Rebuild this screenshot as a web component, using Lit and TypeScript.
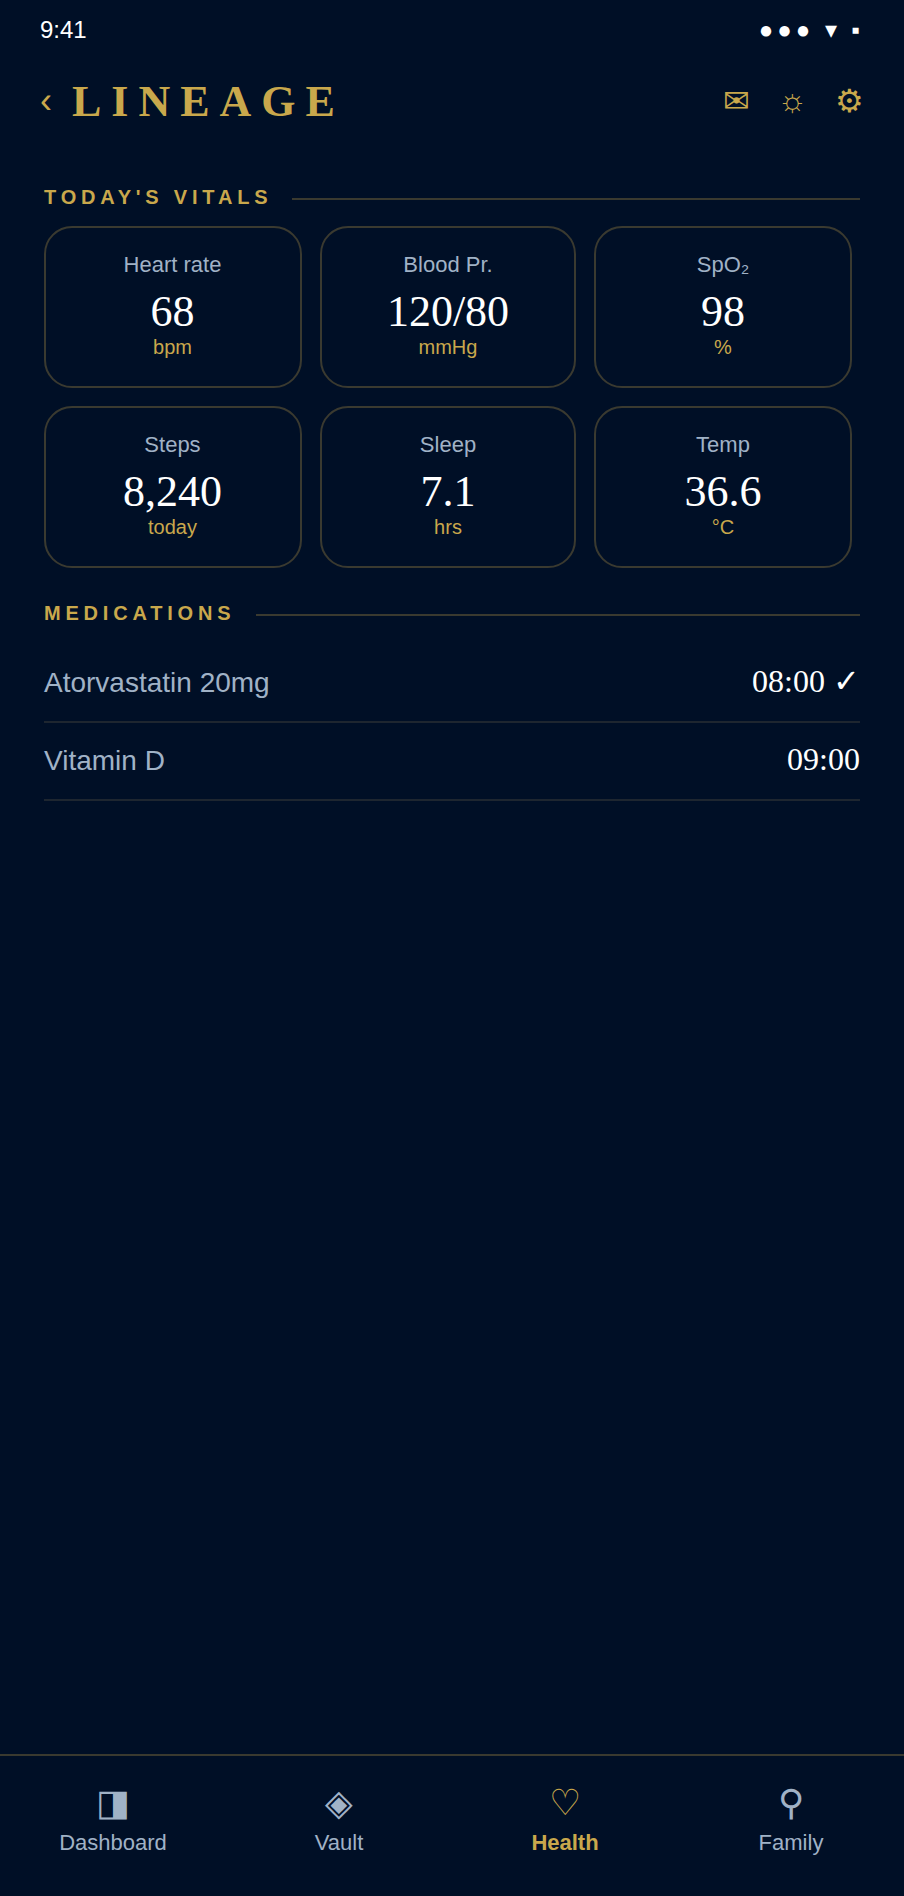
import { LitElement, html, css } from "lit";
import { customElement } from "lit/decorators.js";

const vitals = [
  ["Heart rate", "68", "bpm"],
  ["Blood Pr.", "120/80", "mmHg"],
  ["SpO₂", "98", "%"],
  ["Steps", "8,240", "today"],
  ["Sleep", "7.1", "hrs"],
  ["Temp", "36.6", "°C"],
];
const meds = [
  ["Atorvastatin 20mg", "08:00 ✓"],
  ["Vitamin D", "09:00"],
];
const nav = [
  ["◨", "Dashboard", false],
  ["◈", "Vault", false],
  ["♡", "Health", true],
  ["⚲", "Family", false],
];

@customElement("app-root")
export class AppRoot extends LitElement {
  static styles = css`
    :host {
      display: flex;
      flex-direction: column;
      min-height: 1896px;
      background: #000f26;
      color: #fff;
      font-family: "Liberation Sans", sans-serif;
    }
    .status {
      display: flex;
      justify-content: space-between;
      align-items: center;
      padding: 16px 40px 0;
      height: 28px;
      font-size: 24px;
    }
    .status-icons { font-size: 24px; letter-spacing: 4px; }
    .header {
      display: flex;
      align-items: center;
      justify-content: space-between;
      padding: 18px 40px 0;
      height: 78px;
    }
    .brand { display: flex; align-items: center; gap: 20px; color: #c9a84c; }
    .back { font-size: 36px; }
    .title {
      font-family: "Liberation Serif", serif;
      font-weight: 700;
      font-size: 44px;
      letter-spacing: 10px;
    }
    .actions { display: flex; gap: 28px; color: #c9a84c; font-size: 32px; }
    .main { padding: 0 44px; }
    .section {
      display: flex;
      align-items: center;
      gap: 20px;
      margin-top: 45px;
      height: 24px;
      color: #c9a84c;
      font-size: 20px;
      font-weight: 700;
      letter-spacing: 4.8px;
    }
    .section::after {
      content: "";
      flex: 1;
      height: 2px;
      margin-top: 4px;
      background: #3a3a30;
    }
    .section.second { margin-top: 33px; gap: 21px; }
    .grid {
      display: grid;
      grid-template-columns: 258px 256px 258px;
      gap: 18px;
      margin-top: 17px;
    }
    .card {
      box-sizing: border-box;
      height: 162px;
      border: 2px solid #3a3a30;
      border-radius: 28px;
      padding: 24px 12px 0;
      text-align: center;
    }
    .card:nth-child(3n + 1) { padding-right: 13px; }
    .label { font-size: 22px; line-height: 26px; color: #a0b2c6; }
    .value {
      font-family: "Liberation Serif", serif;
      font-size: 44px;
      line-height: 47px;
      margin-top: 10px;
    }
    .unit { font-size: 20px; line-height: 24px; color: #c9a84c; }
    .meds { margin-top: 20px; }
    .med {
      box-sizing: border-box;
      display: flex;
      justify-content: space-between;
      align-items: baseline;
      height: 78px;
      padding-top: 20px;
      border-bottom: 2px solid #1e2630;
      line-height: 32px;
    }
    .med-name { font-size: 28px; color: #a0b2c6; }
    .med-time { font-family: "Liberation Serif", serif; font-size: 32px; }
    .nav {
      display: grid;
      grid-template-columns: repeat(4, 1fr);
      margin-top: auto;
      height: 142px;
      border-top: 2px solid #3a3a30;
      box-sizing: border-box;
    }
    .tab {
      display: flex;
      flex-direction: column;
      align-items: center;
      padding-top: 25px;
      color: #a0b2c6;
      font-size: 22px;
    }
    .tab.active { color: #c9a84c; font-weight: 700; }
    .tab-icon { font-size: 36px; line-height: 44px; font-weight: 400; }
    .tab-label { line-height: 26px; margin-top: 5px; }
  `;

  render() {
    return html`
      <div class="status">
        <span>9:41</span>
        <span class="status-icons">●●● ▾ ▪</span>
      </div>
      <div class="header">
        <div class="brand">
          <span class="back">‹</span>
          <span class="title">LINEAGE</span>
        </div>
        <div class="actions"><span>✉</span><span>☼</span><span>⚙</span></div>
      </div>
      <div class="main">
        <div class="section">TODAY'S VITALS</div>
        <div class="grid">
          ${vitals.map(
            ([l, v, u]) => html`<div class="card">
              <div class="label">${l}</div>
              <div class="value">${v}</div>
              <div class="unit">${u}</div>
            </div>`
          )}
        </div>
        <div class="section second">MEDICATIONS</div>
        <div class="meds">
          ${meds.map(
            ([n, t]) => html`<div class="med">
              <span class="med-name">${n}</span>
              <span class="med-time">${t}</span>
            </div>`
          )}
        </div>
      </div>
      <div class="nav">
        ${nav.map(
          ([i, l, a]) => html`<div class="tab ${a ? "active" : ""}">
            <span class="tab-icon">${i}</span>
            <span class="tab-label">${l}</span>
          </div>`
        )}
      </div>
    `;
  }
}
